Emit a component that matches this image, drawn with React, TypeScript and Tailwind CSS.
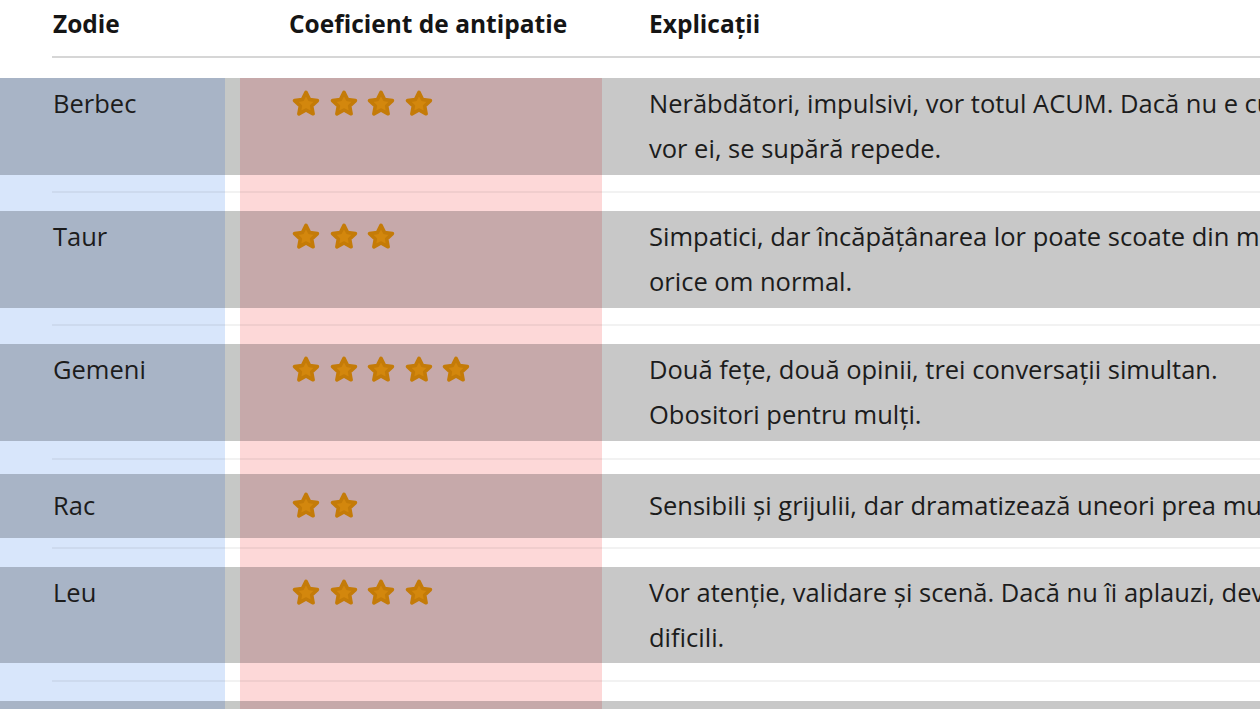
import React from "react";

type Row = {
  sign: string;
  stars: number;
  lines: string[];
  h: number;
  pt: number;
  gapTop: number;
  gapBottom: number;
};

const rows: Row[] = [
  {
    sign: "Berbec",
    stars: 4,
    lines: ["Nerăbdători, impulsivi, vor totul ACUM. Dacă nu e cum", "vor ei, se supără repede."],
    h: 97,
    pt: 3,
    gapTop: 16,
    gapBottom: 18,
  },
  {
    sign: "Taur",
    stars: 3,
    lines: ["Simpatici, dar încăpățânarea lor poate scoate din minți", "orice om normal."],
    h: 97,
    pt: 3,
    gapTop: 16,
    gapBottom: 18,
  },
  {
    sign: "Gemeni",
    stars: 5,
    lines: ["Două fețe, două opinii, trei conversații simultan.", "Obositori pentru mulți."],
    h: 97,
    pt: 3,
    gapTop: 17,
    gapBottom: 14,
  },
  {
    sign: "Rac",
    stars: 2,
    lines: ["Sensibili și grijulii, dar dramatizează uneori prea mult."],
    h: 64,
    pt: 9,
    gapTop: 9,
    gapBottom: 18,
  },
  {
    sign: "Leu",
    stars: 4,
    lines: ["Vor atenție, validare și scenă. Dacă nu îi aplauzi, devin", "dificili."],
    h: 96,
    pt: 3,
    gapTop: 17,
    gapBottom: 19,
  },
];

const Star = () => (
  <svg width="28" height="28" viewBox="0 0 28 28" className="shrink-0">
    <path
      d="M14 2.4 L17.6 9.5 L25.4 10.6 L19.7 16 L21.1 23.8 L14 20 L6.9 23.8 L8.3 16 L2.6 10.6 L10.4 9.5 Z"
      fill="#d3870d"
      stroke="#c47b08"
      strokeWidth="3.6"
      strokeLinejoin="round"
    />
  </svg>
);

const Gap: React.FC<{ top: number; bottom: number }> = ({ top, bottom }) => {
  const seg = (bg: string, w: string, first = false) => (
    <div className={`flex flex-col ${bg} ${w}`}>
      <div style={{ height: top }} />
      <div className={`h-[2px] bg-black/[0.05] ${first ? "ml-[52px]" : ""}`} />
      <div style={{ height: bottom }} />
    </div>
  );
  return (
    <div className="flex">
      {seg("bg-[#d8e6fb]", "w-[225px] shrink-0", true)}
      {seg("bg-white", "w-[15px] shrink-0")}
      {seg("bg-[#fdd8d8]", "w-[362px] shrink-0")}
      {seg("bg-white", "flex-1")}
    </div>
  );
};

export default function App() {
  return (
    <div
      className="w-full overflow-hidden bg-white text-[#1c1c1c]"
      style={{ fontFamily: "'Open Sans', 'Noto Sans', sans-serif" }}
    >
      <div className="flex h-[56px] pt-[7px] text-[24.5px] leading-[34px] font-bold text-[#151515]">
        <div className="w-[240px] shrink-0 pl-[53px]">Zodie</div>
        <div className="w-[362px] shrink-0 pl-[49px]">Coeficient de antipatie</div>
        <div className="flex-1 pl-[47px]">Explicații</div>
      </div>
      <div className="ml-[52px] h-[2px] bg-[#d6d6d6]" />
      <div className="h-[20px]" />

      {rows.map((r) => (
        <div key={r.sign}>
          <div className="flex text-[25.5px] leading-[45px]" style={{ height: r.h }}>
            <div className="w-[225px] shrink-0 bg-[#a8b4c6] pl-[53px]" style={{ paddingTop: r.pt }}>
              {r.sign}
            </div>
            <div className="w-[15px] shrink-0 bg-[#c6c8c6]" />
            <div className="w-[362px] shrink-0 bg-[#c6a9aa] pl-[52px]" style={{ paddingTop: r.pt }}>
              <div className="flex h-[45px] items-center gap-[9.5px]">
                {Array.from({ length: r.stars }).map((_, i) => (
                  <Star key={i} />
                ))}
              </div>
            </div>
            <div
              className="flex-1 overflow-hidden whitespace-nowrap bg-[#c8c8c8] pl-[47px]"
              style={{ paddingTop: r.pt }}
            >
              {r.lines.map((l) => (
                <div key={l}>{l}</div>
              ))}
            </div>
          </div>
          <Gap top={r.gapTop} bottom={r.gapBottom} />
        </div>
      ))}

      <div className="flex h-[8px]">
        <div className="w-[225px] shrink-0 bg-[#a8b4c6]" />
        <div className="w-[15px] shrink-0 bg-[#c6c8c6]" />
        <div className="w-[362px] shrink-0 bg-[#c6a9aa]" />
        <div className="flex-1 bg-[#c8c8c8]" />
      </div>
    </div>
  );
}
